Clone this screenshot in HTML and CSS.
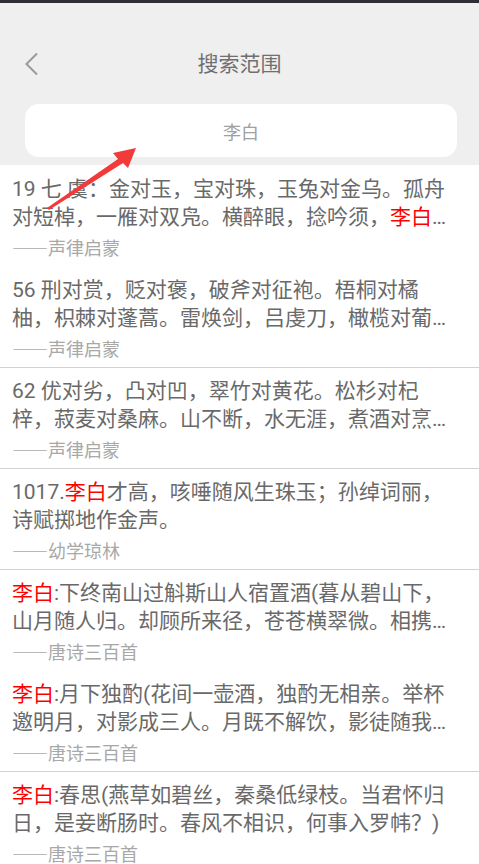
FILE: index.html
```html
<!DOCTYPE html>
<html lang="zh-CN">
<head>
    <meta charset="UTF-8">
    <meta name="viewport" content="width=device-width, initial-scale=1.0">
    <title>搜索范围</title>
    <link rel="stylesheet" href="styles.css">
</head>
<body>
    <div class="status-bar"></div>

    <header class="header">
        <div class="title-bar">
            <a class="back" href="#">
                <svg width="14" height="24" viewBox="0 0 14 24">
                    <polyline points="12,1.5 1.5,12 12,22.5" fill="none" stroke="#999" stroke-width="2"/>
                </svg>
            </a>
            <h1>搜索范围</h1>
            <span></span>
        </div>
        <div class="search-box">李白</div>
    </header>

    <ul class="result-list">
        <li class="result">
            <p class="text">19 七 虞：金对玉，宝对珠，玉兔对金乌。孤舟对短棹，一雁对双凫。横醉眼，捻吟须，<em>李白</em>对杨朱。秋霜多过雁，夜月有啼乌。</p>
            <p class="source">——声律启蒙</p>
        </li>
        <li class="result">
            <p class="text">56 刑对赏，贬对褒，破斧对征袍。梧桐对橘柚，枳棘对蓬蒿。雷焕剑，吕虔刀，橄榄对葡萄。</p>
            <p class="source">——声律启蒙</p>
        </li>
        <li class="result divided">
            <p class="text">62 优对劣，凸对凹，翠竹对黄花。松杉对杞梓，菽麦对桑麻。山不断，水无涯，煮酒对烹茶。</p>
            <p class="source">——声律启蒙</p>
        </li>
        <li class="result divided">
            <p class="text">1017.<em>李白</em>才高，咳唾随风生珠玉；孙绰词丽，诗赋掷地作金声。</p>
            <p class="source">——幼学琼林</p>
        </li>
        <li class="result divided">
            <p class="text"><em>李白</em>:下终南山过斛斯山人宿置酒(暮从碧山下，山月随人归。却顾所来径，苍苍横翠微。相携及田家，童稚开荆扉。)</p>
            <p class="source">——唐诗三百首</p>
        </li>
        <li class="result">
            <p class="text"><em>李白</em>:月下独酌(花间一壶酒，独酌无相亲。举杯邀明月，对影成三人。月既不解饮，影徒随我身。)</p>
            <p class="source">——唐诗三百首</p>
        </li>
        <li class="result divided">
            <p class="text"><em>李白</em>:春思(燕草如碧丝，秦桑低绿枝。当君怀归日，是妾断肠时。春风不相识，何事入罗帏？)</p>
            <p class="source">——唐诗三百首</p>
        </li>
    </ul>

    <!-- red annotation arrow drawn over the screenshot -->
    <svg class="arrow" width="479" height="864" viewBox="0 0 479 864">
        <polygon points="47,208 118,159 113,153 136,148 128,168 123,163 49,210" fill="#f23a3a"/>
    </svg>
</body>
</html>
```

FILE: styles.css
```css
* {
    margin: 0;
    padding: 0;
    box-sizing: border-box;
}

body {
    font-family: Roboto, "Noto Sans CJK SC", sans-serif;
    background: #fff;
    width: 479px;
    height: 864px;
    overflow: hidden;
    position: relative;
}

.status-bar {
    height: 3px;
    background: #2e2e35;
}

.header {
    background: #efefef;
    padding: 41px 22px 8px 25px;
}

.title-bar {
    display: grid;
    grid-template-columns: 60px 1fr 60px;
    align-items: center;
    height: 40px;
    margin-left: -25px;
    margin-right: -22px;
}

.back {
    display: flex;
    align-items: center;
    padding-left: 25px;
    height: 40px;
}

h1 {
    text-align: center;
    font-size: 21px;
    font-weight: normal;
    color: #6f6f6f;
    line-height: 40px;
}

.search-box {
    margin-top: 20px;
    height: 53px;
    background: #fff;
    border-radius: 14px;
    display: flex;
    align-items: center;
    justify-content: center;
    font-size: 18px;
    color: #a0a0a0;
}

.result-list {
    list-style: none;
}

.result {
    padding: 10px 20px 5px 12px;
}

.result.divided {
    border-top: 1px solid #d2d2d2;
    padding-top: 9px;
}

.text {
    font-size: 21px;
    line-height: 28px;
    color: #696969;
    display: -webkit-box;
    -webkit-line-clamp: 2;
    -webkit-box-orient: vertical;
    overflow: hidden;
}

.text em {
    font-style: normal;
    color: #f00;
}

.source {
    margin-top: 2px;
    font-family: "Noto Sans CJK SC", sans-serif;
    font-size: 18px;
    line-height: 28px;
    color: #a8a8a8;
}

.arrow {
    position: absolute;
    left: 0;
    top: 0;
    pointer-events: none;
}
```
